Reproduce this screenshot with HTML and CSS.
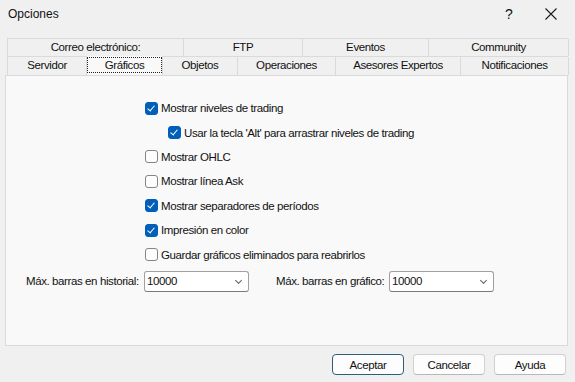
FILE: index.html
```html
<!DOCTYPE html>
<html lang="es">
<head>
    <meta charset="UTF-8">
    <title>Opciones</title>
    <link rel="stylesheet" href="styles.css">
</head>
<body>
    <div class="window">
        <div class="titlebar">
            <span class="title">Opciones</span>
            <span class="help">?</span>
            <span class="close">
                <svg width="12" height="12" viewBox="0 0 12 12"><path d="M0.5 0.5 L11.5 11.5 M11.5 0.5 L0.5 11.5" stroke="#1b1b1b" stroke-width="1.1" fill="none"/></svg>
            </span>
        </div>

        <div class="tabs">
            <div class="tab-row row-top">
                <div class="tab">Correo electrónico:</div>
                <div class="tab">FTP</div>
                <div class="tab">Eventos</div>
                <div class="tab">Community</div>
            </div>
            <div class="tab-row row-bottom">
                <div class="tab">Servidor</div>
                <div class="tab active"><span class="focus">Gráficos</span></div>
                <div class="tab">Objetos</div>
                <div class="tab">Operaciones</div>
                <div class="tab">Asesores Expertos</div>
                <div class="tab">Notificaciones</div>
            </div>
        </div>

        <div class="panel">
            <div class="checks">
                <label class="check"><span class="box on"></span>Mostrar niveles de trading</label>
                <label class="check sub"><span class="box on"></span>Usar la tecla 'Alt' para arrastrar niveles de trading</label>
                <label class="check"><span class="box"></span>Mostrar OHLC</label>
                <label class="check"><span class="box"></span>Mostrar línea Ask</label>
                <label class="check"><span class="box on"></span>Mostrar separadores de períodos</label>
                <label class="check"><span class="box on"></span>Impresión en color</label>
                <label class="check"><span class="box"></span>Guardar gráficos eliminados para reabrirlos</label>
            </div>

            <div class="fields">
                <span class="field-label first">Máx. barras en historial:</span>
                <div class="combo">10000<span class="chevron"></span></div>
                <span class="field-label second">Máx. barras en gráfico:</span>
                <div class="combo">10000<span class="chevron"></span></div>
            </div>
        </div>

        <div class="buttons">
            <button class="btn default">Aceptar</button>
            <button class="btn">Cancelar</button>
            <button class="btn">Ayuda</button>
        </div>
    </div>
</body>
</html>
```

FILE: styles.css
```css
body {
    margin: 0;
    padding: 0;
    background-color: #f0f0f0;
    font-family: "Liberation Sans", Arial, sans-serif;
    font-size: 11.5px;
    letter-spacing: -0.4px;
    color: #111;
}

.window {
    width: 575px;
    height: 382px;
    background-color: #f0f0f0;
    box-sizing: border-box;
}

.titlebar {
    height: 27px;
    display: flex;
    align-items: center;
    padding-left: 8px;
}

.title {
    font-size: 12px;
    letter-spacing: 0;
    flex: 1;
}

.help {
    font-size: 14px;
    width: 40px;
}

.close {
    width: 30px;
    display: flex;
    align-items: center;
}

.tabs {
    margin-top: 11px;
    margin-left: 7px;
    width: 561px;
}

.tab-row {
    display: grid;
    border-left: 1px solid #dadada;
}

.row-top {
    grid-template-columns: 176px 119px 126px 140px;
    height: 17px;
    border-top: 1px solid #dadada;
}

.row-bottom {
    grid-template-columns: 79px 76px 75px 98px 125px 108px;
    height: 18px;
    border-top: 1px solid #dadada;
}

.tab {
    border-right: 1px solid #dadada;
    text-align: center;
    line-height: 16px;
    white-space: nowrap;
}

.tab.active {
    background-color: #f9f9f9;
    position: relative;
    z-index: 1;
    height: 19px;
    margin-top: -1px;
    line-height: 15px;
}

.focus {
    display: block;
    height: 16px;
    border: 1px dotted #222;
    margin-top: 1px;
    box-sizing: border-box;
}

.panel {
    margin-left: 5px;
    width: 563px;
    height: 271px;
    box-sizing: border-box;
    background-color: #f9f9f9;
    border: 1px solid #dadada;
    padding-top: 20px;
}

.checks {
    display: flex;
    flex-direction: column;
    padding-left: 139px;
}

.check {
    display: flex;
    align-items: center;
    height: 24.4px;
    white-space: nowrap;
}

.check.sub {
    padding-left: 23px;
}

.box {
    width: 13px;
    height: 13px;
    box-sizing: border-box;
    border: 1px solid #858585;
    border-radius: 3px;
    background-color: #fdfdfd;
    margin-right: 3px;
    position: relative;
}

.box.on {
    background-color: #005fb8;
    border-color: #005fb8;
}

.box.on::after {
    content: "";
    position: absolute;
    left: 3px;
    top: 1px;
    width: 3px;
    height: 6px;
    border-right: 1.5px solid #fff;
    border-bottom: 1.5px solid #fff;
    transform: rotate(40deg);
}

.fields {
    display: flex;
    align-items: center;
    margin-top: 4px;
    padding-left: 20px;
    white-space: nowrap;
}

.field-label.first {
    width: 118px;
}

.field-label.second {
    width: 113px;
    margin-left: 27px;
}

.combo {
    width: 105px;
    height: 21px;
    box-sizing: border-box;
    background-color: #fff;
    border: 1px solid #a0a0a0;
    border-bottom-color: #7a7a7a;
    border-radius: 3px;
    padding-left: 2px;
    line-height: 18px;
    position: relative;
}

.chevron {
    position: absolute;
    right: 7px;
    top: 6px;
    width: 4px;
    height: 4px;
    border-right: 1px solid #606060;
    border-bottom: 1px solid #606060;
    transform: rotate(45deg);
}

.buttons {
    display: flex;
    justify-content: flex-end;
    gap: 9px;
    padding-right: 9px;
    margin-top: 8px;
}

.btn {
    width: 72px;
    height: 21px;
    font-family: inherit;
    font-size: 11.5px;
    letter-spacing: -0.4px;
    color: #111;
    background-color: #fdfdfd;
    border: 1px solid #d0d0d0;
    border-bottom-color: #b8b8b8;
    border-radius: 4px;
    padding: 0;
}

.btn.default {
    border: 1px solid #2e5f7a;
    box-shadow: inset 0 0 0 1px #fdfdfd;
}
```
